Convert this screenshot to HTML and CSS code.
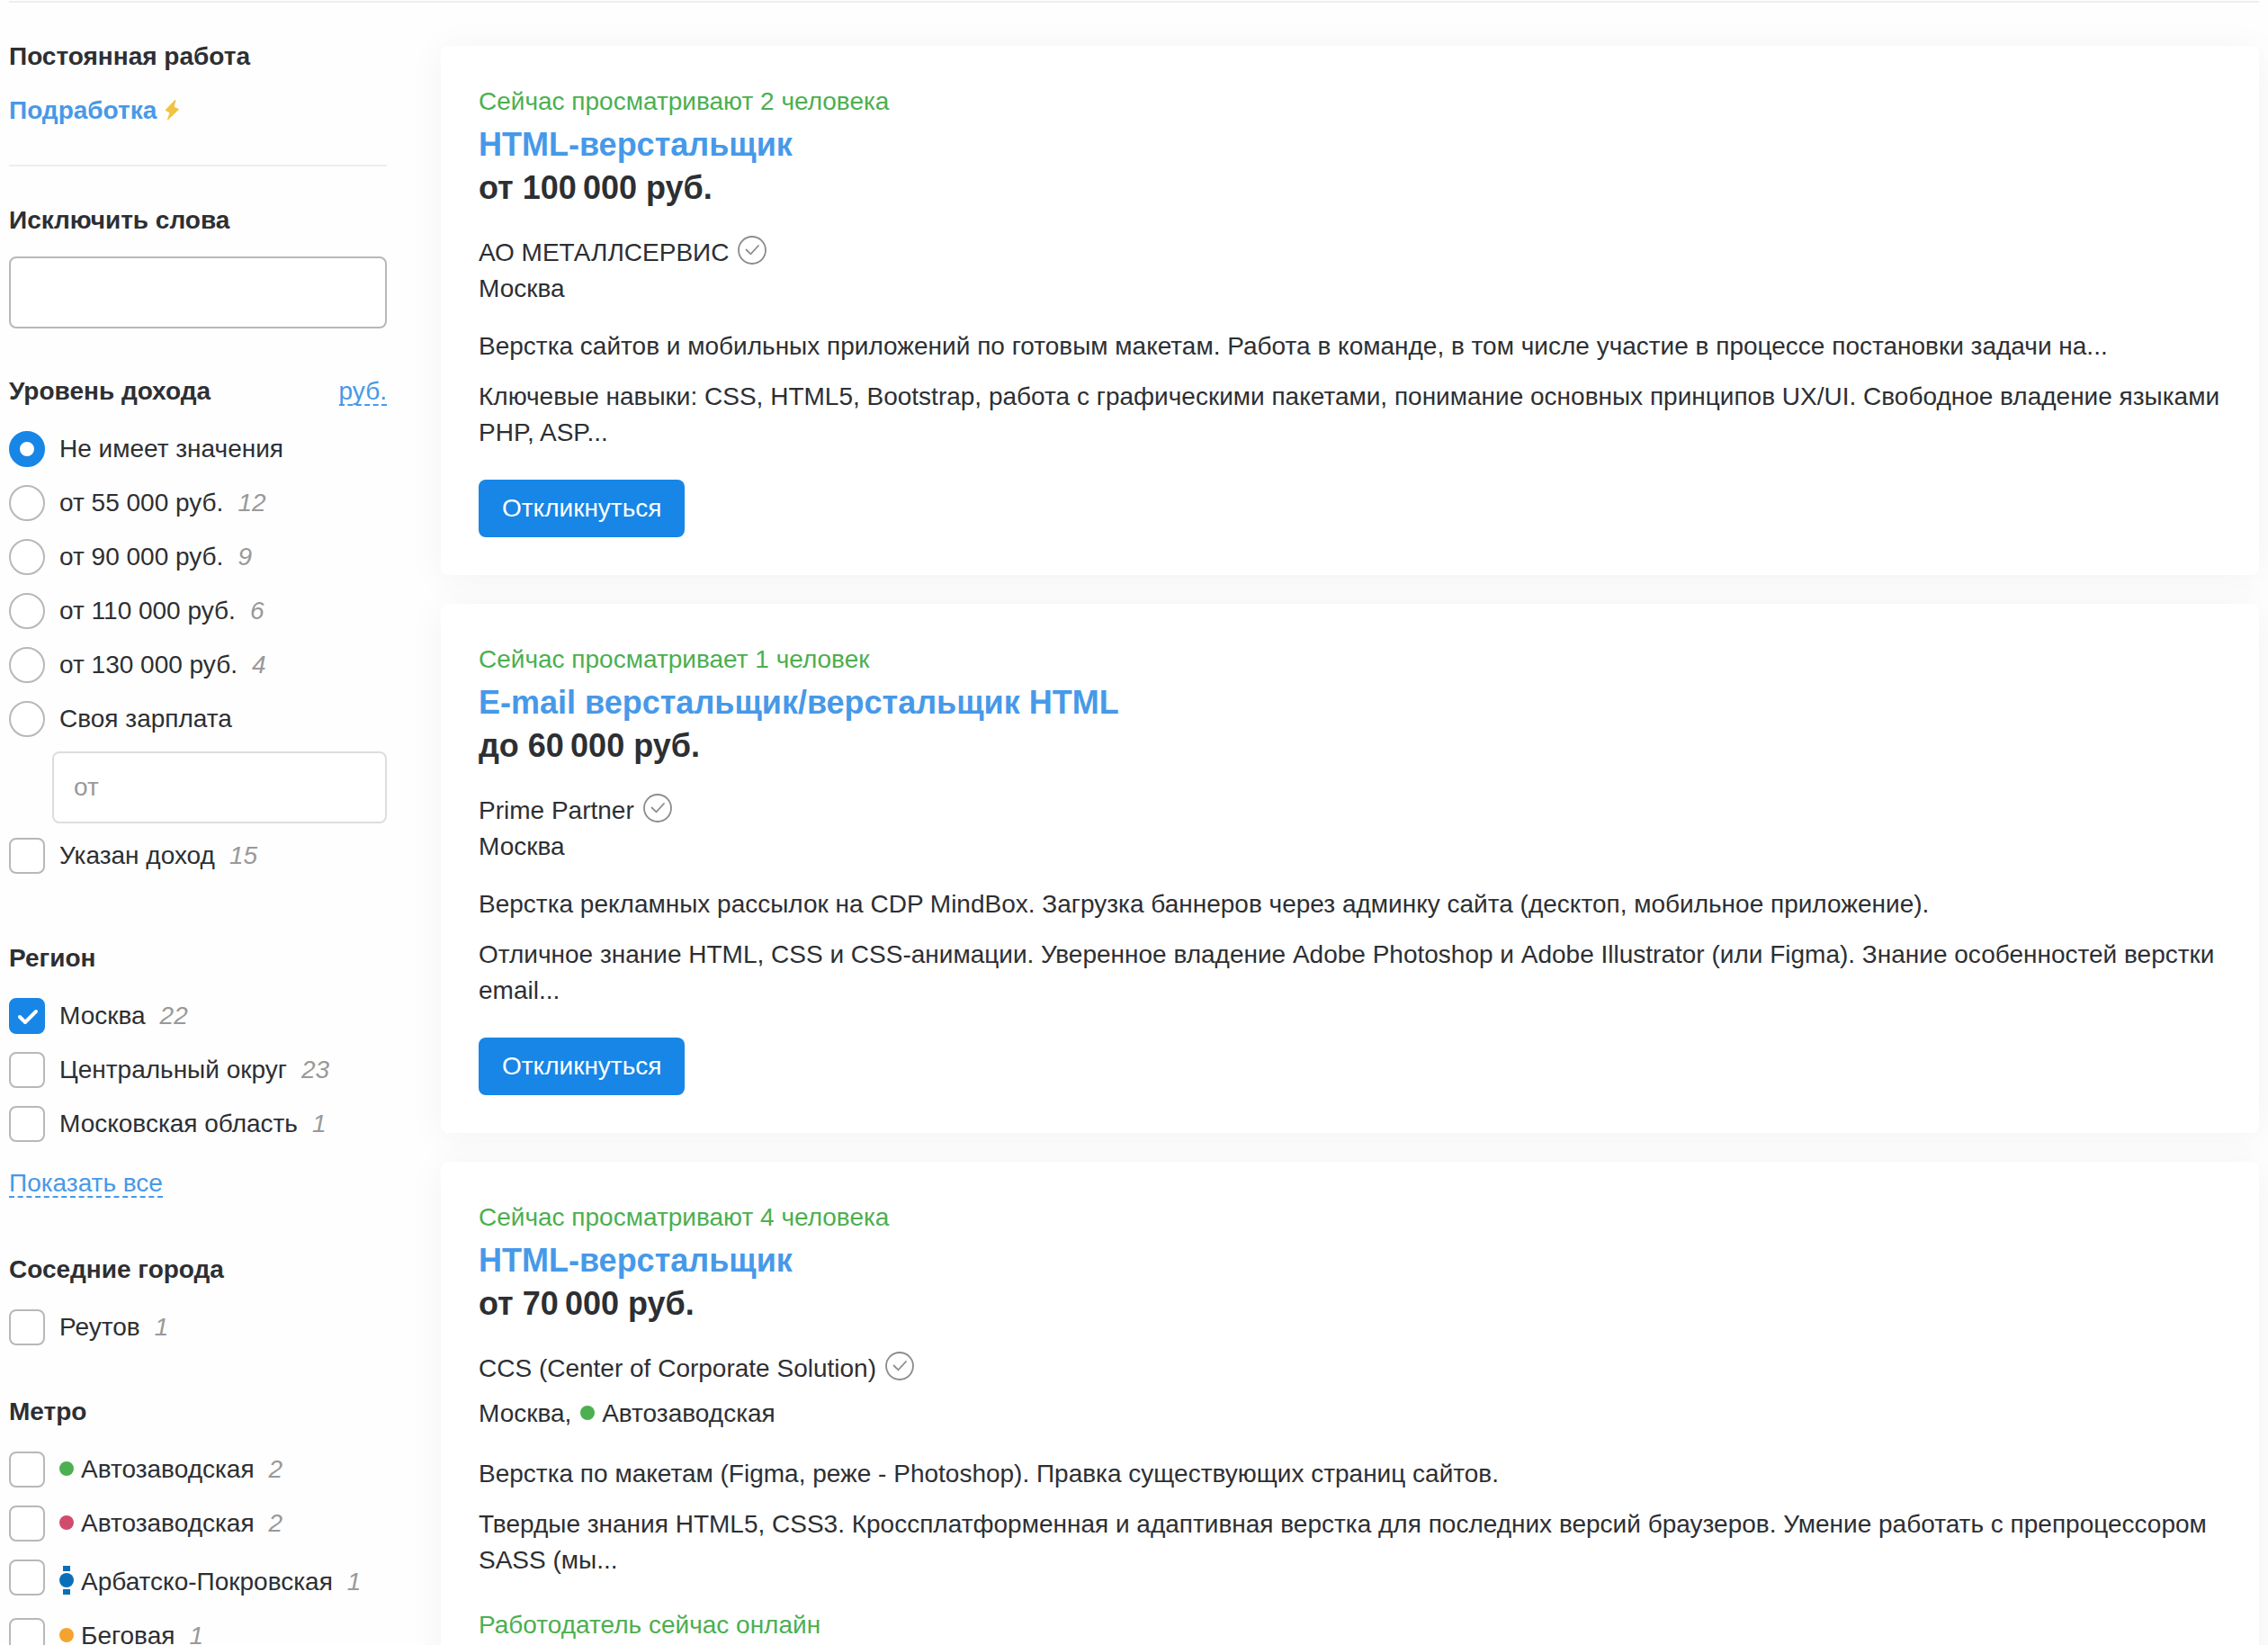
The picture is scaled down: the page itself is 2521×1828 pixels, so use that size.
FILE: index.html
```
<!DOCTYPE html>
<html lang="ru">
<head>
  <meta charset="UTF-8">
  <meta name="viewport" content="width=device-width, initial-scale=1.0">
  <title>Вакансии: HTML-верстальщик</title>
  <link rel="stylesheet" href="styles.css">
</head>
<body>
  <!-- shared icons -->
  <svg class="sprite" aria-hidden="true">
    <symbol id="icon-verified" viewBox="0 0 32 32">
      <circle cx="16" cy="16" r="15" fill="none" stroke="#8c8c8c" stroke-width="1.8"/>
      <path d="M9.500 15.500l5 4.800L23 11" fill="none" stroke="#8c8c8c" stroke-width="1.8" stroke-linecap="round"/>
    </symbol>
  </svg>

  <div class="page">
    <aside class="filters">
      <nav class="work-type">
        <span class="filter-title">Постоянная работа</span>
        <a class="work-link" href="#">Подработка
          <svg class="bolt" viewBox="0 0 16 24" aria-hidden="true">
            <path d="M12 1L1 12.500l5 2.500-2.500 8L15.500 11.500 10 9z" fill="#f2c340" stroke="#f2c340" stroke-linejoin="round"/>
          </svg>
        </a>
      </nav>

      <section class="filter filter-exclude">
        <label class="filter-title" for="exclude">Исключить слова</label>
        <input class="text-input exclude-input" type="text" id="exclude">
      </section>

      <section class="filter">
        <div class="filter-head">
          <h2 class="filter-title">Уровень дохода</h2>
          <button class="dashed-link" type="button">руб.</button>
        </div>
        <div class="options">
          <label class="option"><input class="radio" type="radio" name="salary" checked><span>Не имеет значения</span></label>
          <label class="option"><input class="radio" type="radio" name="salary"><span>от 55 000 руб.</span><i class="count">12</i></label>
          <label class="option"><input class="radio" type="radio" name="salary"><span>от 90 000 руб.</span><i class="count">9</i></label>
          <label class="option"><input class="radio" type="radio" name="salary"><span>от 110 000 руб.</span><i class="count">6</i></label>
          <label class="option"><input class="radio" type="radio" name="salary"><span>от 130 000 руб.</span><i class="count">4</i></label>
          <label class="option"><input class="radio" type="radio" name="salary"><span>Своя зарплата</span></label>
        </div>
        <div class="own-salary">
          <input class="text-input" type="text" placeholder="от" aria-label="Своя зарплата от">
        </div>
        <label class="option"><input class="checkbox" type="checkbox"><span>Указан доход</span><i class="count">15</i></label>
      </section>

      <section class="filter filter-region">
        <h2 class="filter-title">Регион</h2>
        <div class="options">
          <label class="option"><input class="checkbox" type="checkbox" checked><span>Москва</span><i class="count">22</i></label>
          <label class="option"><input class="checkbox" type="checkbox"><span>Центральный округ</span><i class="count">23</i></label>
          <label class="option"><input class="checkbox" type="checkbox"><span>Московская область</span><i class="count">1</i></label>
        </div>
        <button class="dashed-link show-all" type="button">Показать все</button>
      </section>

      <section class="filter">
        <h2 class="filter-title">Соседние города</h2>
        <div class="options">
          <label class="option"><input class="checkbox" type="checkbox"><span>Реутов</span><i class="count">1</i></label>
        </div>
      </section>

      <section class="filter">
        <h2 class="filter-title">Метро</h2>
        <div class="options">
          <label class="option"><input class="checkbox" type="checkbox"><span class="metro metro-green">Автозаводская</span><i class="count">2</i></label>
          <label class="option"><input class="checkbox" type="checkbox"><span class="metro metro-red">Автозаводская</span><i class="count">2</i></label>
          <label class="option option-line">
            <input class="checkbox" type="checkbox">
            <svg class="line-icon" viewBox="0 0 16 32" aria-hidden="true">
              <path d="M4 0h8v6H4zM4 26h8v6H4z" fill="#0a6fb8"/>
              <circle cx="8" cy="16" r="8" fill="#0a6fb8"/>
            </svg>
            <span class="line-name">Арбатско-Покровская</span><i class="count">1</i>
          </label>
          <label class="option"><input class="checkbox" type="checkbox"><span class="metro metro-orange">Беговая</span><i class="count">1</i></label>
        </div>
      </section>
    </aside>

    <main class="vacancies">
      <article class="card">
        <div class="status">Сейчас просматривают 2 человека</div>
        <h2 class="card-title"><a href="#">HTML-верстальщик</a></h2>
        <div class="salary">от 100&#8201;000 руб.</div>
        <div class="company">АО МЕТАЛЛСЕРВИС <svg class="verified"><use href="#icon-verified"/></svg></div>
        <div class="location">Москва</div>
        <p class="text">Верстка сайтов и мобильных приложений по готовым макетам. Работа в команде, в том числе участие в процессе постановки задачи на...</p>
        <p class="text">Ключевые навыки: CSS, HTML5, Bootstrap, работа с графическими пакетами, понимание основных принципов UX/UI. Свободное владение языками PHP, ASP...</p>
        <button class="respond" type="button">Откликнуться</button>
      </article>

      <article class="card">
        <div class="status">Сейчас просматривает 1 человек</div>
        <h2 class="card-title"><a href="#">E-mail верстальщик/верстальщик HTML</a></h2>
        <div class="salary">до 60&#8201;000 руб.</div>
        <div class="company">Prime Partner <svg class="verified"><use href="#icon-verified"/></svg></div>
        <div class="location">Москва</div>
        <p class="text">Верстка рекламных рассылок на CDP MindBox. Загрузка баннеров через админку сайта (десктоп, мобильное приложение).</p>
        <p class="text">Отличное знание HTML, CSS и CSS-анимации. Уверенное владение Adobe Photoshop и Adobe Illustrator (или Figma). Знание особенностей верстки email...</p>
        <button class="respond" type="button">Откликнуться</button>
      </article>

      <article class="card">
        <div class="status">Сейчас просматривают 4 человека</div>
        <h2 class="card-title"><a href="#">HTML-верстальщик</a></h2>
        <div class="salary">от 70&#8201;000 руб.</div>
        <div class="company">CCS (Center of Corporate Solution) <svg class="verified"><use href="#icon-verified"/></svg></div>
        <div class="location location-metro">Москва, <span class="metro metro-green">Автозаводская</span></div>
        <p class="text">Верстка по макетам (Figma, реже - Photoshop). Правка существующих страниц сайтов.</p>
        <p class="text">Твердые знания HTML5, CSS3. Кроссплатформенная и адаптивная верстка для последних версий браузеров. Умение работать с препроцессором SASS (мы...</p>
        <div class="status online">Работодатель сейчас онлайн</div>
      </article>
    </main>
  </div>
</body>
</html>
```
FILE: styles.css
```
* {
  box-sizing: border-box;
}
body {
  margin: 0;
  background-color: #fefefe;
  color: #2d2f33;
  font-family: "Liberation Sans", Arial, sans-serif;
  font-size: 28px;
  line-height: 40px;
}
h2, p {
  margin: 0;
}
a {
  color: #4799e8;
  text-decoration: none;
}
button, input {
  font-family: inherit;
  font-size: inherit;
  line-height: inherit;
  color: inherit;
}
.sprite {
  position: absolute;
  width: 0;
  height: 0;
}
.page {
  display: flex;
  gap: 60px;
  margin: 1px 10px 0;
  border-top: 2px solid #eee;
}

/* filters */
.filters {
  flex: 0 0 420px;
  padding-top: 40px;
}
.work-type {
  display: flex;
  flex-direction: column;
  gap: 20px;
  padding-bottom: 40px;
  border-bottom: 2px solid #eee;
  margin-bottom: 40px;
}
.work-link {
  font-weight: bold;
}
.bolt {
  width: 18px;
  height: 24px;
  vertical-align: -2px;
}
.filter {
  margin-bottom: 54px;
}
.filter-title {
  display: block;
  font-size: 28px;
  font-weight: bold;
}
.filter-head {
  display: flex;
  justify-content: space-between;
}
.text-input {
  display: block;
  width: 100%;
  height: 80px;
  padding: 0 22px;
  border: 2px solid #ddd;
  border-radius: 8px;
  background-color: #fff;
}
.text-input::placeholder {
  color: #999;
}
.filter-exclude {
  margin-bottom: 50px;
}
.exclude-input {
  margin-top: 20px;
  border-color: #b8b8b8;
}
.dashed-link {
  height: 36px;
  padding: 0;
  border: none;
  border-bottom: 2px dashed #4799e8;
  background: none;
  color: #4799e8;
  cursor: pointer;
}
.options {
  display: flex;
  flex-direction: column;
  gap: 20px;
  margin-top: 24px;
}
.option {
  display: flex;
  align-items: center;
}
.radio, .checkbox {
  appearance: none;
  flex: none;
  width: 40px;
  height: 40px;
  margin: 0 16px 0 0;
  border: 2px solid #b8b8b8;
  background-color: #fff;
}
.radio {
  border-radius: 50%;
}
.radio:checked {
  border: 12px solid #1886e6;
}
.checkbox {
  border-radius: 8px;
}
.checkbox:checked {
  border-color: #1886e6;
  background: #1886e6 url("data:image/svg+xml,%3Csvg xmlns='http://www.w3.org/2000/svg' viewBox='0 0 36 36'%3E%3Cpath d='M10 19l6 6L28 13' fill='none' stroke='white' stroke-width='4' stroke-linecap='round' stroke-linejoin='round'/%3E%3C/svg%3E");
}
.count {
  margin-left: 16px;
  color: #999;
}
.own-salary {
  margin: 16px 0;
  padding-left: 48px;
}
.filter-region {
  margin-top: 74px;
  margin-bottom: 60px;
}
.show-all {
  display: block;
  margin-top: 26px;
}

/* metro */
.metro::before {
  content: "";
  display: inline-block;
  width: 16px;
  height: 16px;
  margin-right: 8px;
  border-radius: 50%;
  vertical-align: 2px;
}
.metro-green::before {
  background-color: #4caf50;
}
.metro-red::before {
  background-color: #d14b6c;
}
.metro-orange::before {
  background-color: #f5a330;
}
.option-line {
  align-items: flex-start;
}
.line-icon {
  width: 16px;
  height: 32px;
  margin: 7px 8px 0 0;
}
.option-line .line-name, .option-line .count {
  padding-top: 5px;
}

/* vacancies */
.vacancies {
  flex: 1;
  min-width: 0;
  display: flex;
  flex-direction: column;
  gap: 32px;
  padding-top: 48px;
}
.card {
  padding: 42px;
  border-radius: 8px;
  background-color: #fff;
  box-shadow: 0 4px 40px rgba(0, 0, 0, 0.05);
}
.status {
  color: #4caf50;
}
.card-title, .salary {
  font-size: 36px;
  font-weight: bold;
  line-height: 48px;
}
.card-title {
  margin-top: 4px;
}
.company {
  margin-top: 28px;
}
.verified {
  width: 32px;
  height: 32px;
  margin-left: 2px;
  vertical-align: -4px;
}
.location {
  margin-bottom: 24px;
}
.location-metro {
  padding: 10px 0 3px;
}
.location-metro .metro {
  margin-left: 2px;
}
.text {
  margin-bottom: 16px;
}
.respond {
  display: block;
  height: 64px;
  margin-top: 32px;
  padding: 0 26px;
  border: none;
  border-radius: 8px;
  background-color: #1886e6;
  color: #fff;
  cursor: pointer;
}
.online {
  margin-top: 32px;
}
```
